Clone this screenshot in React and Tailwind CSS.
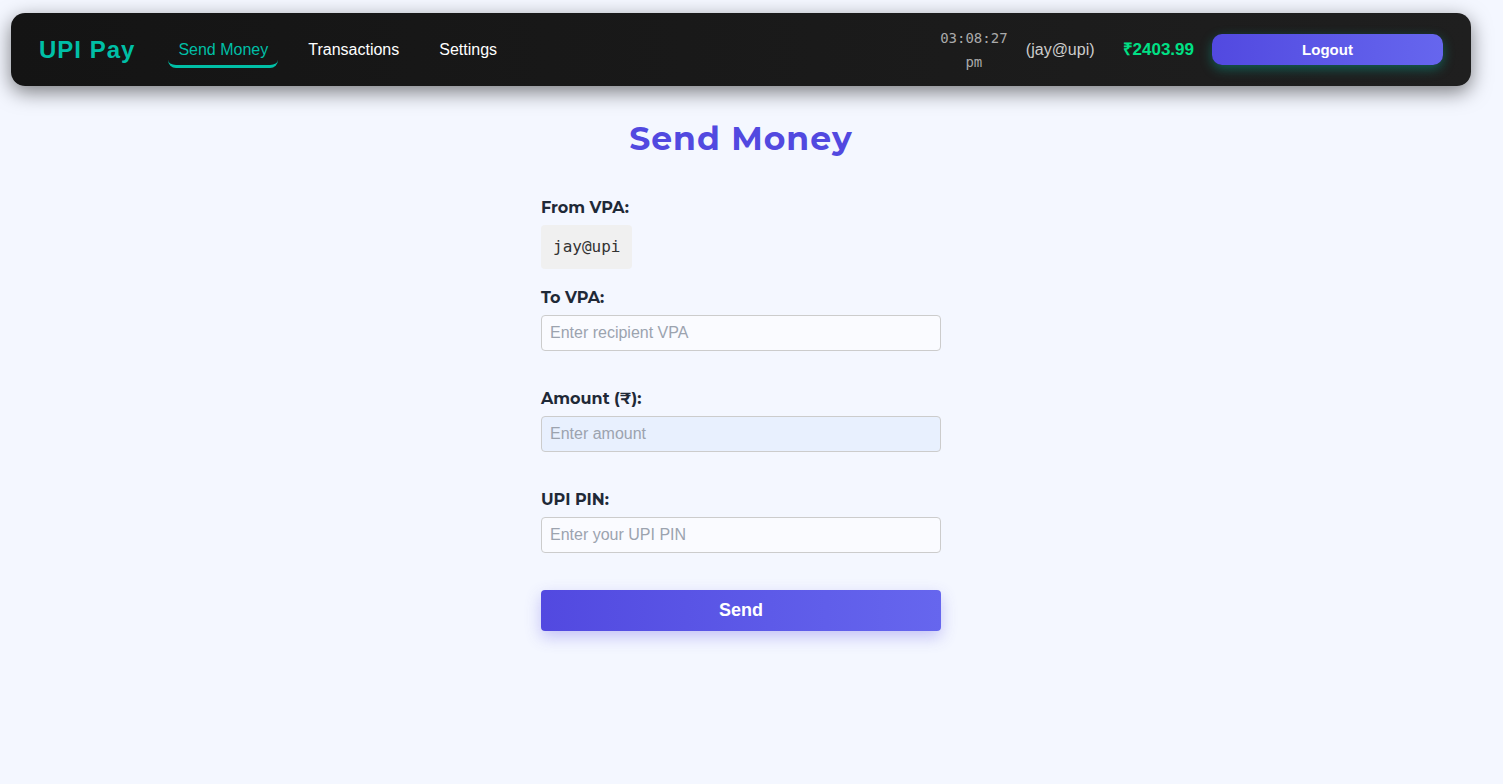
import { useState } from "react";

const navItems = [
  { label: "Send Money", active: true },
  { label: "Transactions", active: false },
  { label: "Settings", active: false },
];

const fields = [
  { id: "to-vpa", label: "To VPA:", placeholder: "Enter recipient VPA", type: "text", fill: "bg-[#fafbff]" },
  { id: "amount", label: "Amount (₹):", placeholder: "Enter amount", type: "text", fill: "bg-[#e8f0fe]" },
  { id: "pin", label: "UPI PIN:", placeholder: "Enter your UPI PIN", type: "password", fill: "bg-[#fafbff]" },
];

const labelText = "font-['Montserrat',Inter,sans-serif] leading-[26px] font-bold text-[#1f2937]";

function NavLink({ label, active }) {
  return (
    <a
      href="#"
      aria-current={active ? "page" : undefined}
      className={
        "rounded-lg border-b-3 px-2.5 pt-[7px] pb-[3px] " +
        (active ? "border-[#00bfa6] text-[#00bfa6]" : "border-transparent text-white")
      }
    >
      {label}
    </a>
  );
}

function Header() {
  return (
    <header className="flex min-h-[73px] items-center justify-between rounded-[14px] bg-linear-to-r from-[#141414] to-[#1f1f1f] px-7 py-3 shadow-[0_6px_20px_rgba(0,0,0,0.5)]">
      <div className="flex items-center gap-[33px]">
        <span className="text-2xl font-bold tracking-[1px] text-[#00bfa6]">UPI Pay</span>
        <nav className="flex items-center gap-5">
          {navItems.map((item) => (
            <NavLink key={item.label} {...item} />
          ))}
        </nav>
      </div>
      <div className="flex items-center gap-[18px]">
        <time className="w-[68px] text-center font-['DejaVu_Sans_Mono',monospace] text-sm leading-6 text-[#aaaaaa]">
          03:08:27 pm
        </time>
        <span className="pr-2.5 text-[#cccccc]">(jay@upi)</span>
        <span className="text-[17px] leading-6 font-bold text-[#00e085]">₹2403.99</span>
        <button
          type="button"
          className="w-[231px] rounded-[10px] bg-linear-to-r from-[#5249e0] to-[#6666ee] py-1 text-[15px] leading-[23px] font-bold text-white shadow-[0_4px_12px_rgba(0,191,166,0.4)]"
        >
          Logout
        </button>
      </div>
    </header>
  );
}

function Field({ id, label, placeholder, type, fill }) {
  const [value, setValue] = useState("");
  return (
    <div className="flex flex-col gap-1">
      <label htmlFor={id} className={labelText}>
        {label}
      </label>
      <input
        id={id}
        type={type}
        value={value}
        onChange={(e) => setValue(e.target.value)}
        placeholder={placeholder}
        className={"h-9 w-full rounded border border-[#cccccc] px-2 text-[#1f2937] placeholder:text-[#9ca3af] " + fill}
      />
    </div>
  );
}

export default function App() {
  return (
    <div className="min-h-screen bg-[#f4f7ff] py-[13px] pr-8 pl-[11px] font-['Liberation_Sans',Arial,sans-serif] text-base">
      <Header />
      <main className="mx-auto mt-7 max-w-[400px]">
        <h1 className="text-center font-['Montserrat',Inter,sans-serif] text-[33px] leading-12 font-bold tracking-[1px] text-[#5249e0]">
          Send Money
        </h1>
        <form className="mt-[33px]" onSubmit={(e) => e.preventDefault()}>
          <div className="mb-4 flex flex-col items-start gap-1">
            <span className={labelText}>From VPA:</span>
            <output className="rounded bg-[#f0f0f0] px-3 py-2.5 font-['DejaVu_Sans_Mono',monospace] text-[#333333]">
              jay@upi
            </output>
          </div>
          <div className="flex flex-col gap-[35px]">
            {fields.map((field) => (
              <Field key={field.id} {...field} />
            ))}
          </div>
          <button
            type="submit"
            className="mt-[37px] w-full rounded bg-linear-to-r from-[#5249e0] to-[#6666ee] py-1.5 text-lg leading-[29px] font-bold text-white shadow-[0_6px_16px_rgba(82,73,224,0.3)]"
          >
            Send
          </button>
        </form>
      </main>
    </div>
  );
}
